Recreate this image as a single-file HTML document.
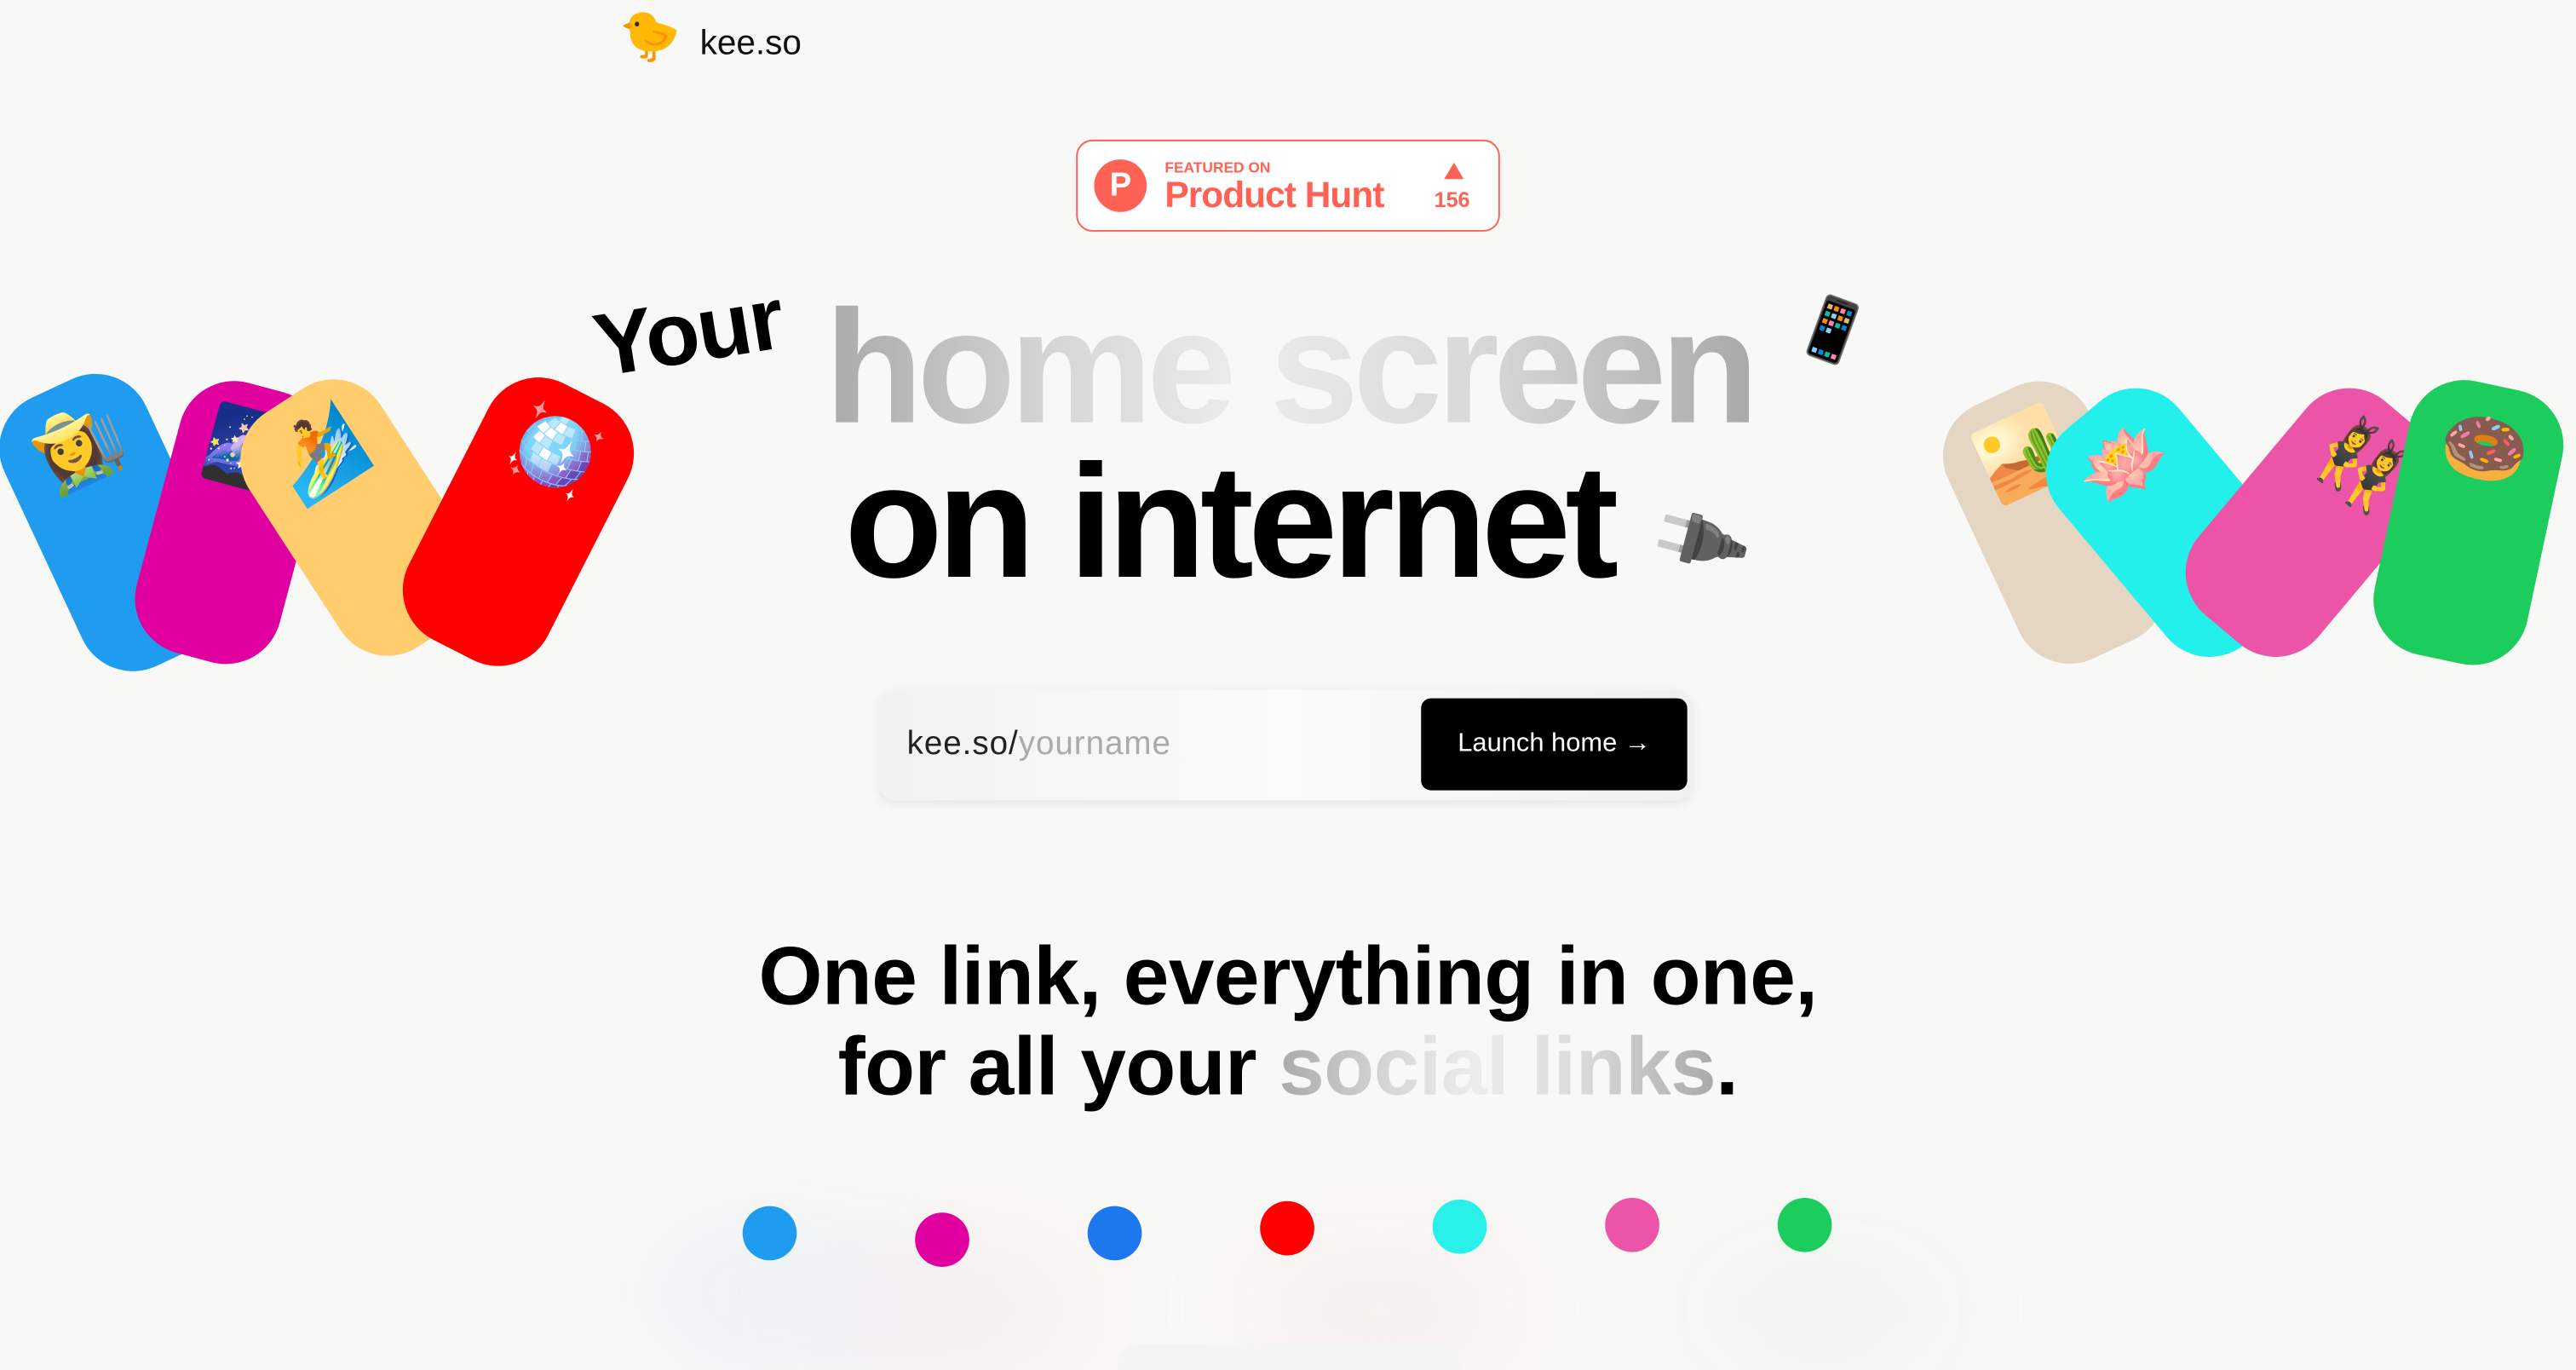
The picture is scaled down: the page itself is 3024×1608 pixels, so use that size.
<!DOCTYPE html>
<html><head><meta charset="utf-8">
<style>
html,body{margin:0;padding:0;width:3024px;height:1608px;overflow:hidden;background:#f8f8f6;}
#clip{position:relative;width:3024px;height:1608px;overflow:hidden;}
#w{position:absolute;left:0;top:0;width:1568px;height:834px;overflow:hidden;transform:scale(1.9286);transform-origin:0 0;font-family:"Liberation Sans",sans-serif;}
.a{position:absolute;}
.card{position:absolute;border-radius:34px;}
.card span{position:absolute;left:0;right:0;top:18px;text-align:center;font-size:44px;line-height:1;}
.g{background:linear-gradient(90deg,#a9a9a9 0%,#d6d6d6 25%,#ececec 45%,#d9d9d9 70%,#a9a9a9 100%);-webkit-background-clip:text;background-clip:text;color:transparent;}
.dot{position:absolute;width:33px;height:33px;border-radius:50%;}
.blob{position:absolute;border-radius:50%;filter:blur(30px);opacity:.5}
</style></head><body><div id="clip"><div id="w">

<div class="a" style="left:377px;top:8px;font-size:30px;line-height:1">🐤</div>
<div class="a" style="left:426px;top:15px;font-size:21px;color:#111">kee.so</div>

<div class="a" style="left:655px;top:85px;width:256px;height:54px;border:1.5px solid #ff6154;border-radius:10px;background:#fff;">
  <div class="a" style="left:10px;top:11px;width:32px;height:32px;border-radius:50%;background:#ff6154;color:#fff;font-weight:bold;font-size:20px;text-align:center;line-height:32px">P</div>
  <div class="a" style="left:53px;top:11px;font-size:9px;font-weight:bold;color:#ff6154">FEATURED ON</div>
  <div class="a" style="left:53px;top:20px;font-size:22px;font-weight:bold;color:#ff6154;letter-spacing:-0.5px">Product Hunt</div>
  <div class="a" style="left:223px;top:13px;width:0;height:0;border-left:6px solid transparent;border-right:6px solid transparent;border-bottom:10px solid #ff6154"></div>
  <div class="a" style="left:217px;top:28px;font-size:13px;font-weight:bold;color:#ff6154">156</div>
</div>

<div class="card" style="left:22px;top:228px;width:95px;height:180px;background:#1f9bef;transform:rotate(-25deg)"><span>👩‍🌾</span></div>
<div class="card" style="left:95px;top:233px;width:90px;height:170px;background:#e000a0;transform:rotate(15deg)"><span>🌌</span></div>
<div class="card" style="left:172px;top:230px;width:95px;height:170px;background:#ffcc6e;transform:rotate(-33deg)"><span>🏄</span></div>
<div class="card" style="left:268px;top:230px;width:95px;height:175px;background:#ff0000;transform:rotate(27deg)"><span>🪩</span></div>

<div class="card" style="left:1203px;top:233px;width:95px;height:170px;background:#e5d5c3;transform:rotate(-25deg)"><span>🏜️</span></div>
<div class="card" style="left:1275px;top:233px;width:95px;height:170px;background:#23f0ea;transform:rotate(-40deg)"><span>🪷</span></div>
<div class="card" style="left:1360px;top:233px;width:95px;height:170px;background:#ec55a7;transform:rotate(40deg)"><span>👯‍♀️</span></div>
<div class="card" style="left:1455px;top:233px;width:95px;height:170px;background:#1ccd5e;transform:rotate(12deg)"><span>🍩</span></div>

<div class="a" style="left:367px;top:180px;font-size:54px;font-weight:bold;color:#000;transform:rotate(-9deg);transform-origin:0 100%;letter-spacing:-1px">Your</div>
<div class="a g" style="left:502px;top:168px;font-size:98px;font-weight:bold;letter-spacing:-3.6px;line-height:110px;white-space:nowrap">home screen</div>
<div class="a" style="left:1093px;top:180px;font-size:36px;transform:rotate(20deg)">📱</div>
<div class="a" style="left:514px;top:262px;font-size:98px;font-weight:bold;letter-spacing:-3.5px;line-height:110px;color:#000;white-space:nowrap">on internet</div>
<div class="a" style="left:1008px;top:305px;font-size:42px;transform:rotate(-30deg)">🔌</div>

<div class="a" style="left:535px;top:420px;width:495px;height:67px;border-radius:10px;background:linear-gradient(90deg,#f2f2f0,#fbfbfa 50%,#f0f0ee);box-shadow:0 2px 6px rgba(0,0,0,.08)">
  <div class="a" style="left:17px;top:22px;font-size:20px;color:#222;letter-spacing:.5px">kee.so/<span style="color:#aaa">yourname</span></div>
  <div class="a" style="left:330px;top:5px;width:162px;height:56px;background:#000;border-radius:6px;color:#fff;font-size:16px;line-height:56px;text-align:center">Launch home →</div>
</div>

<div class="a" style="left:0;width:1568px;top:567px;text-align:center;font-size:50px;font-weight:bold;color:#000;line-height:55px;letter-spacing:-0.3px">One link, everything in one,<br>for all your <span class="g">social links</span>.</div>

<div class="blob" style="left:390px;top:740px;width:160px;height:94px;background:#e4edf5"></div>
<div class="blob" style="left:500px;top:760px;width:160px;height:74px;background:#f3e3ec"></div>
<div class="blob" style="left:760px;top:760px;width:160px;height:74px;background:#f5e6e4"></div>
<div class="blob" style="left:1030px;top:760px;width:160px;height:74px;background:#e5f2e8"></div>

<div class="dot" style="left:452px;top:734px;background:#1f9bef"></div>
<div class="dot" style="left:557px;top:738px;background:#e000a0"></div>
<div class="dot" style="left:662px;top:734px;background:#1d78ef"></div>
<div class="dot" style="left:767px;top:731px;background:#ff0000"></div>
<div class="dot" style="left:872px;top:730px;background:#2af0ea"></div>
<div class="dot" style="left:977px;top:729px;background:#ec55a7"></div>
<div class="dot" style="left:1082px;top:729px;background:#1ccd5e"></div>
<div class="a" style="left:680px;top:818px;width:210px;height:16px;border-radius:14px 14px 0 0;background:#f4f4f3"></div>

</div></div></body></html>
